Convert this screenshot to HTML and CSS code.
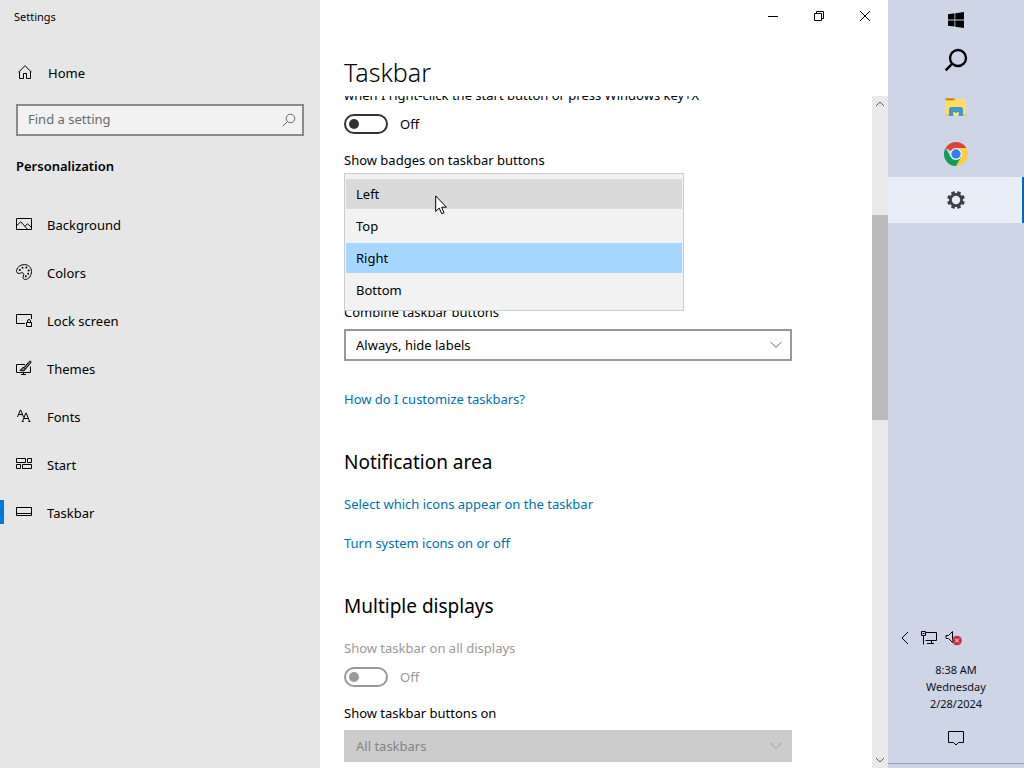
FILE: index.html
```html
<!DOCTYPE html>
<html lang="en">
<head>
<meta charset="utf-8">
<meta name="viewport" content="width=device-width, initial-scale=1">
<title>Settings</title>
<link rel="stylesheet" href="styles.css">
</head>
<body>
<div class="desktop">
  <aside class="sidebar">
    <div class="app-title">Settings</div>
    <a class="nav-link home" href="#home">
      <svg class="icon" viewBox="0 0 16 16"><path d="M1.500 8.200 8 1.700l6.500 6.500M2.500 7.500v7h4v-5h3v5h4v-7"/></svg>
      <span>Home</span>
    </a>
    <div class="search">
      <input class="search-input" type="text" placeholder="Find a setting" aria-label="Find a setting">
      <svg class="search-icon" viewBox="0 0 14 14"><circle cx="8.500" cy="5.500" r="4.300"/><path d="M5.400 8.600.8 13.200"/></svg>
    </div>
    <h2 class="category">Personalization</h2>
    <nav class="nav">
      <a class="nav-link" href="#background">
        <svg class="icon" viewBox="0 0 16 16"><path d="M.5 2.500h15v11H.5zM.8 9.500l4-3.700 6.500 7.200M9 10.300l2.500-2.600 4 4"/></svg>
        <span>Background</span>
      </a>
      <a class="nav-link" href="#colors">
        <svg class="icon" viewBox="0 0 16 16"><path d="M.6 6.200C1.500 2.500 4.800.6 8.500.6c4 0 7 3 7 6.900 0 4.300-2.800 7.900-6.200 7.900-1.700 0-2.300-.9-2.300-2 0-1.200.8-1.700.8-2.900 0-1.100-.8-1.800-1.800-1.800-1.200 0-1.600.8-2.800.8C1.500 9.500.1 8.300.6 6.200z"/><g class="solid"><circle cx="3.800" cy="6" r="1"/><circle cx="6.500" cy="3.700" r="1"/><circle cx="10.300" cy="3.600" r="1"/><circle cx="12.700" cy="6.500" r="1"/><circle cx="12.200" cy="9.800" r="1"/><circle cx="9.800" cy="12.300" r="1"/></g></svg>
        <span>Colors</span>
      </a>
      <a class="nav-link" href="#lock">
        <svg class="icon" viewBox="0 0 16 16"><path d="M9 11.500H.5v-9h15V7M10.500 10.500h5v4h-5zM11.500 10.500V9a1.500 1.500 0 0 1 3 0v1.500"/></svg>
        <span>Lock screen</span>
      </a>
      <a class="nav-link" href="#themes">
        <svg class="icon" viewBox="0 0 16 16"><path d="M9 4.500H.5v8h14v-6M7.500 12.500v2M5 14.500h5"/><path fill="#777" d="M14.800 1.400c-.6-.6-1.300-.2-1.800.3L8 7.500l1.500 1.500 5-5.800c.5-.5.8-1.300.3-1.800zM8 7.500c-1.500-.2-2.300.7-2.500 1.700-.2.700-.8 1-1.600 1 2.300 1.200 5.200.9 5.600-1.200"/></svg>
        <span>Themes</span>
      </a>
      <a class="nav-link" href="#fonts">
        <svg class="icon" viewBox="0 0 16 16"><path d="M1.500 9 4.300 2h.4l2.800 7M2.500 6.500h4M6.500 13.500l3.300-8.500h.4l3.400 8.500M7.600 10.500h4.800M5.700 13.500h2M12.300 13.500h2"/></svg>
        <span>Fonts</span>
      </a>
      <a class="nav-link" href="#start">
        <svg class="icon" viewBox="0 0 16 16"><path d="M.5 2.500h9v4h-9zM11.500 2.500h4v4h-4zM.5 8.500h4v4h-4zM6.500 8.500h9v4h-9z"/></svg>
        <span>Start</span>
      </a>
      <a class="nav-link current" href="#taskbar" aria-current="page">
        <svg class="icon" viewBox="0 0 16 16"><path d="M.5 3.500h15v8H.5zM.5 9.500h15"/></svg>
        <span>Taskbar</span>
      </a>
    </nav>
  </aside>

  <main class="page">
    <div class="window-controls">
      <button type="button" aria-label="Minimize"><svg viewBox="0 0 12 12"><path d="M1 6.500h10"/></svg></button>
      <button type="button" aria-label="Restore"><svg viewBox="0 0 12 12"><path d="M1.500 3.500h7v7h-7zM3.500 3.500v-2h7v7h-2"/></svg></button>
      <button type="button" aria-label="Close"><svg viewBox="0 0 12 12"><path d="M1 1l10 10M11 1 1 11"/></svg></button>
    </div>
    <h1 class="page-title">Taskbar</h1>
    <div class="scroller">
      <form class="settings">
        <label class="label" for="powershell">when I right-click the start button or press Windows key+X</label>
        <div class="toggle-row">
          <input class="toggle" type="checkbox" role="switch" id="powershell"><span>Off</span>
        </div>
        <div class="label spaced" id="badges">Show badges on taskbar buttons</div>
        <div class="location">
          <div class="popup" role="listbox" aria-label="Taskbar location">
            <button class="option hovered" type="button" role="option">Left</button>
            <button class="option" type="button" role="option">Top</button>
            <button class="option selected" type="button" role="option" aria-selected="true">Right</button>
            <button class="option" type="button" role="option">Bottom</button>
          </div>
          <svg class="cursor" viewBox="0 0 12 20"><path d="M.7.9v15.500l3.500-3.300 2.500 5.600 2.300-1-2.400-5.500h4.800z"/></svg>
        </div>
        <label class="label" for="combine">Combine taskbar buttons</label>
        <div class="combo">
          <select id="combine"><option>Always, hide labels</option></select>
          <svg class="chevron" viewBox="0 0 12 8"><path d="M.5 1 6 6.500 11.500 1"/></svg>
        </div>
        <a class="link help" href="#help">How do I customize taskbars?</a>
        <h2 class="section-title">Notification area</h2>
        <a class="link" href="#icons">Select which icons appear on the taskbar</a>
        <a class="link next" href="#system">Turn system icons on or off</a>
        <h2 class="section-title">Multiple displays</h2>
        <label class="label muted" for="all-displays">Show taskbar on all displays</label>
        <div class="toggle-row muted">
          <input class="toggle" type="checkbox" role="switch" id="all-displays" disabled><span>Off</span>
        </div>
        <label class="label spaced" for="buttons-on">Show taskbar buttons on</label>
        <div class="combo">
          <select id="buttons-on" disabled><option>All taskbars</option></select>
          <svg class="chevron" viewBox="0 0 12 8"><path d="M.5 1 6 6.500 11.500 1"/></svg>
        </div>
      </form>
      <div class="scrollbar">
        <button type="button" aria-label="Scroll up"><svg viewBox="0 0 10 6"><path d="M1 5l4-4 4 4"/></svg></button>
        <div class="track"><div class="thumb"></div></div>
        <button type="button" aria-label="Scroll down"><svg viewBox="0 0 10 6"><path d="M1 1l4 4 4-4"/></svg></button>
      </div>
    </div>
  </main>

  <aside class="taskbar">
    <button class="task start" type="button" aria-label="Start">
      <svg width="16" height="16" viewBox="0 0 16 16"><path d="M0 2.200 6.500 1.300v6.200H0zM7.300 1.200 16 0v7.500H7.300zM0 8.400h6.500v6.200L0 13.700zM7.300 8.400H16V16l-8.700-1.200z"/></svg>
    </button>
    <button class="task find" type="button" aria-label="Search">
      <svg width="24" height="24" viewBox="0 0 24 24"><circle cx="14" cy="10" r="8" fill="none" stroke="#000" stroke-width="2.300"/><path d="M8.300 15.700 1.700 22.300" stroke="#000" stroke-width="2.500"/></svg>
    </button>
    <button class="task" type="button" aria-label="File Explorer">
      <svg width="24" height="20" viewBox="0 0 24 20"><path fill="#dfa21b" d="M1 1h9.500l1.500 2v2H1z"/><path fill="#ffdb68" d="M1 3.500h9.500L12 2h10v16.500H1z"/><path fill="#b67d15" d="M3 2h6v1H3z"/><path fill="#4398c8" d="M5 19v-7.500L6.500 10h11l1.500 1.500V19h-4.500v-4h-5v4z"/><path fill="#ffe48d" d="M9.500 15h5v3.500h-5z"/><path fill="#4398c8" d="M10.500 15h3l-1.500 1.500z"/><path fill="#e8b449" d="M1 17.500h4v1H1zM19 17.500h4v1h-4z"/></svg>
    </button>
    <button class="task" type="button" aria-label="Chrome">
      <svg width="24" height="24" viewBox="0 0 24 24"><path fill="#db4437" d="M12 12 1.600 6a12 12 0 0 1 20.800 0z"/><path fill="#ffcd40" d="M12 6h10.400A12 12 0 0 1 12 24l5.200-9z"/><path fill="#0f9d58" d="M1.600 6A12 12 0 0 0 12 24l5.200-9H6.800z"/><circle cx="12" cy="12" r="6" fill="#f5f7fb"/><circle cx="12" cy="12" r="4.700" fill="#3380ec"/></svg>
    </button>
    <button class="task active" type="button" aria-label="Settings">
      <svg width="18" height="18" viewBox="0 0 18 18"><circle cx="9" cy="9" r="5.600" fill="none" stroke="#3e4147" stroke-width="2.800"/><path stroke="#3e4147" stroke-width="3.600" d="M11.300 3.450 12.400.8M14.550 6.700 17.200 5.600M14.550 11.300l2.650 1.100M11.300 14.550l1.100 2.650M6.700 14.550 5.600 17.200M3.450 11.300.8 12.400M3.450 6.700.8 5.600M6.700 3.450 5.600.8"/></svg>
    </button>
    <div class="tray">
      <div class="tray-icons">
        <button type="button" aria-label="Show hidden icons"><svg width="8" height="14" viewBox="0 0 8 14"><path d="M7 1 1 7l6 6"/></svg></button>
        <button type="button" aria-label="Network"><svg width="16" height="14" viewBox="0 0 16 14"><path d="M5 1.500h10.500v8h-11M.5.500h4v4h-4zM1.500 2.500h2M2.500 4.500v9M10.500 9.500v3M6 12.500h7"/></svg></button>
        <button type="button" aria-label="Volume muted"><svg width="18" height="16" viewBox="0 0 18 16"><path d="M1 5.500h2.500l4-4v11l-4-4H1z"/><circle cx="12" cy="10.500" r="4.800" fill="#c9303e" stroke="none"/><path class="cross" d="m10.200 8.700 3.600 3.600m0-3.600-3.600 3.600"/></svg></button>
      </div>
      <time class="clock" datetime="2024-02-28T08:38">8:38 AM<br>Wednesday<br>2/28/2024</time>
      <button class="action" type="button" aria-label="Notifications"><svg width="18" height="18" viewBox="0 0 18 18"><path d="M1.500 2.500h15v11h-5L9 16l-2.500-2.500h-5z"/></svg></button>
      <div class="edge"></div>
    </div>
  </aside>
</div>
</body>
</html>
```
FILE: styles.css
```css
* { box-sizing: border-box; }

body {
  margin: 0;
  font: 13px/20px "Noto Sans", "Open Sans", sans-serif;
  color: #000;
  background: #fff;
}

button { border: 0; padding: 0; background: none; font: inherit; color: inherit; }
a { text-decoration: none; color: inherit; }
h1, h2 { margin: 0; font-weight: 400; }
svg { display: block; }

.desktop {
  display: grid;
  grid-template-columns: 320px minmax(0, 1fr) 136px;
  height: 100vh;
  overflow: hidden;
}

/* Sidebar */
.sidebar { background: #e6e6e6; }
.app-title { padding: 7px 14px 0; height: 49px; font-size: 11px; }
.nav-link {
  display: flex;
  align-items: center;
  gap: 15px;
  height: 48px;
  padding: 0 16px;
}
.icon { width: 16px; height: 16px; fill: none; stroke: #000; margin-bottom: 2px; }
.icon .solid { fill: #000; stroke: none; }
.home .icon { margin-left: 1px; }
.search { position: relative; margin: 7px 16px 0; }
.search-input {
  display: block;
  width: 100%;
  height: 32px;
  padding: 0 32px 2px 10px;
  border: 2px solid #8a8a8a;
  border-radius: 0;
  background: #f2f2f2;
  font: inherit;
}
.search-input::placeholder { color: #6a6a6a; opacity: 1; }
.search-icon {
  position: absolute;
  right: 8px;
  top: 9px;
  width: 14px;
  height: 14px;
  fill: none;
  stroke: #666;
}
.category { padding: 20px 16px 0; font-size: 13px; font-weight: 600; line-height: 20px; }
.nav { padding-top: 25px; }
.current { position: relative; }
.current::before {
  content: "";
  position: absolute;
  left: 0;
  top: 11px;
  width: 4px;
  height: 24px;
  background: #0078d7;
}

/* Page */
.page { display: flex; flex-direction: column; min-height: 0; }
.window-controls { display: flex; justify-content: flex-end; }
.window-controls button { width: 46px; height: 32px; display: grid; place-items: center; }
.window-controls svg { width: 12px; height: 12px; fill: none; stroke: #000; }
.page-title { padding: 22px 24px 6px; font-size: 25px; font-weight: 300; line-height: 36px; }
.scroller { display: flex; flex: 1; min-height: 0; overflow: hidden; }
.settings {
  display: flex;
  flex-direction: column;
  flex: 1;
  align-items: flex-start;
  margin-top: -11px;
  padding: 0 80px 0 24px;
}
.toggle-row { display: flex; align-items: center; gap: 12px; margin-top: 9px; }
.toggle {
  appearance: none;
  display: flex;
  align-items: center;
  width: 44px;
  height: 20px;
  margin: 0;
  padding: 0 3px;
  border: 2px solid #333;
  border-radius: 10px;
}
.toggle::before { content: ""; width: 10px; height: 10px; border-radius: 50%; background: #333; }
.toggle:disabled { border-color: #999; }
.toggle:disabled::before { background: #999; }
.muted { color: #999; }
.spaced { margin-top: 16px; }

.location { position: relative; width: 340px; max-width: 100%; height: 129px; }
.popup {
  position: absolute;
  z-index: 1;
  left: 0;
  right: 0;
  top: 3px;
  display: flex;
  flex-direction: column;
  gap: 2px;
  padding: 5px 1px;
  border: 1px solid #ccc;
  background: #f2f2f2;
}
.option { height: 30px; padding: 0 10px; text-align: left; }
.hovered { background: #dadada; }
.selected { background: #a6d8ff; }
.cursor {
  position: absolute;
  z-index: 2;
  left: 91px;
  top: 25px;
  width: 12px;
  height: 20px;
  fill: #fff;
  stroke: #000;
}
.location + .label { margin-top: 3px; }

.combo { position: relative; width: 100%; max-width: 448px; margin-top: 7px; }
.combo select {
  appearance: none;
  display: block;
  width: 100%;
  height: 32px;
  padding: 0 32px 0 10px;
  border: 2px solid #999;
  border-radius: 0;
  background: #fff;
  color: #000;
  font: inherit;
}
.combo select:disabled { background: #ccc; border-color: #ccc; color: #848484; opacity: 1; }
.chevron {
  position: absolute;
  right: 10px;
  top: 12px;
  width: 12px;
  height: 8px;
  fill: none;
  stroke: #666;
  pointer-events: none;
}
select:disabled + .chevron { stroke: #999; }
.link { color: #0070b0; margin-top: 18px; }
.help { margin-top: 28px; }
.next { margin-top: 19px; }
.section-title { margin-top: 39px; font-size: 19px; line-height: 28px; }
.section-title + .label { margin-top: 18px; }

.scrollbar { display: flex; flex-direction: column; width: 16px; background: #e8e9e8; }
.scrollbar button { height: 16px; display: grid; place-items: center; }
.scrollbar svg { width: 10px; height: 6px; fill: none; stroke: #555; }
.track { flex: 1; padding-top: 103px; }
.thumb { height: 205px; background: #b9bab9; }

/* Taskbar */
.taskbar { display: flex; flex-direction: column; background: #cdd5e7; }
.task { display: grid; place-items: center; height: 47px; }
.start { height: 40px; }
.find { height: 40px; margin-bottom: 3px; }
.active { height: 46px; background: #e9edf8; border-right: 2px solid #0067c0; padding-left: 2px; }
.tray { display: flex; flex-direction: column; margin-top: auto; }
.tray-icons { display: flex; align-items: center; gap: 12px; padding-left: 13px; height: 20px; }
.tray-icons button + button + button { margin-left: -4px; }
.tray svg { fill: none; stroke: #000; }
.tray .cross { stroke: #fff; }
.clock { margin-top: 13px; text-align: center; font-size: 11px; line-height: 17px; color: #101018; }
.action { align-self: center; margin: 17px 0 16px; }
.edge { height: 5px; border-top: 1px solid #8fa3c8; }
```
